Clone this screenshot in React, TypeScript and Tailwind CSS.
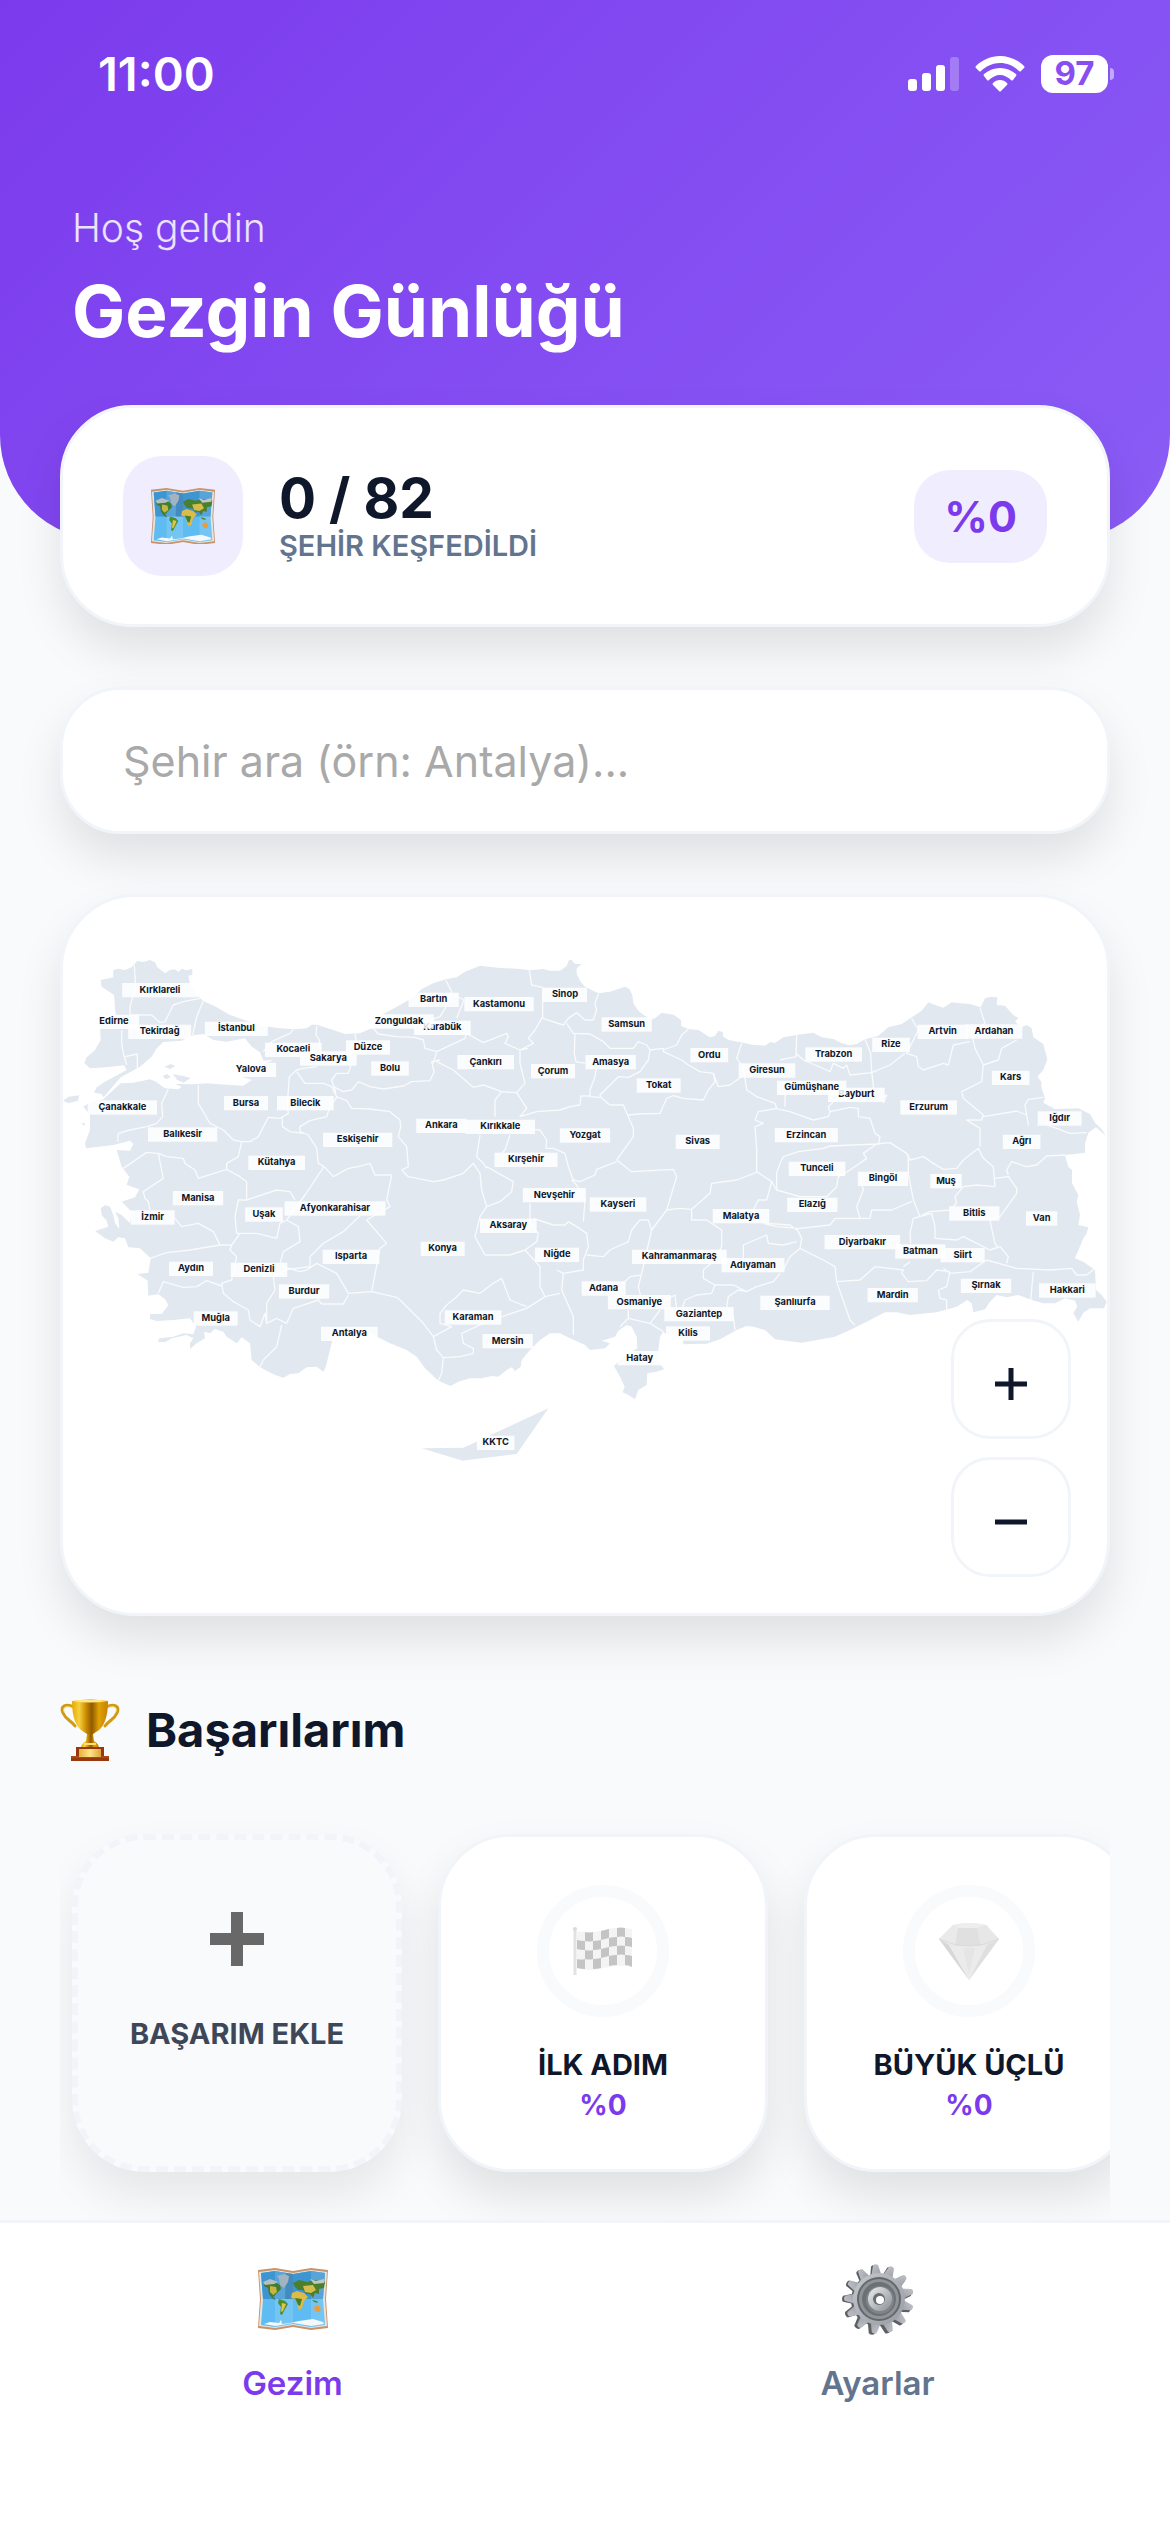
import React, { useState } from 'react';
import { clsx } from 'clsx';

interface City {
  name: string;
  x: number;
  y: number;
}

interface Achievement {
  id: string;
  title: string;
  percent: number;
  icon: React.ReactNode;
}

// Later labels are painted over earlier ones
const CITIES: City[] = [
  { name: 'Kırklareli', x: 330, y: 298 },
  { name: 'Edirne', x: 192, y: 393 },
  { name: 'Tekirdağ', x: 329, y: 423 },
  { name: 'İstanbul', x: 559, y: 414 },
  { name: 'Kocaeli', x: 730, y: 477 },
  { name: 'Sakarya', x: 835, y: 503 },
  { name: 'Yalova', x: 603, y: 537 },
  { name: 'Düzce', x: 954, y: 470 },
  { name: 'Bolu', x: 1020, y: 533 },
  { name: 'Bartın', x: 1151, y: 327 },
  { name: 'Karabük', x: 1177, y: 411 },
  { name: 'Zonguldak', x: 1047, y: 392 },
  { name: 'Kastamonu', x: 1347, y: 340 },
  { name: 'Sinop', x: 1545, y: 312 },
  { name: 'Samsun', x: 1730, y: 401 },
  { name: 'Çankırı', x: 1307, y: 514 },
  { name: 'Çorum', x: 1509, y: 541 },
  { name: 'Amasya', x: 1682, y: 514 },
  { name: 'Tokat', x: 1826, y: 584 },
  { name: 'Ordu', x: 1978, y: 493 },
  { name: 'Giresun', x: 2151, y: 539 },
  { name: 'Ankara', x: 1174, y: 705 },
  { name: 'Kırıkkale', x: 1351, y: 708 },
  { name: 'Yozgat', x: 1605, y: 734 },
  { name: 'Sivas', x: 1943, y: 753 },
  { name: 'Kırşehir', x: 1428, y: 807 },
  { name: 'Çanakkale', x: 217, y: 650 },
  { name: 'Bursa', x: 588, y: 637 },
  { name: 'Bilecik', x: 766, y: 637 },
  { name: 'Balıkesir', x: 398, y: 731 },
  { name: 'Eskişehir', x: 923, y: 747 },
  { name: 'Kütahya', x: 680, y: 816 },
  { name: 'Trabzon', x: 2351, y: 491 },
  { name: 'Rize', x: 2523, y: 462 },
  { name: 'Artvin', x: 2678, y: 423 },
  { name: 'Ardahan', x: 2832, y: 422 },
  { name: 'Kars', x: 2882, y: 561 },
  { name: 'Bayburt', x: 2419, y: 612 },
  { name: 'Gümüşhane', x: 2285, y: 591 },
  { name: 'Erzurum', x: 2636, y: 650 },
  { name: 'Erzincan', x: 2269, y: 733 },
  { name: 'Iğdır', x: 3029, y: 683 },
  { name: 'Ağrı', x: 2915, y: 753 },
  { name: 'Manisa', x: 444, y: 922 },
  { name: 'İzmir', x: 308, y: 980 },
  { name: 'Uşak', x: 642, y: 971 },
  { name: 'Afyonkarahisar', x: 855, y: 953 },
  { name: 'Aydın', x: 423, y: 1134 },
  { name: 'Denizli', x: 627, y: 1137 },
  { name: 'Isparta', x: 903, y: 1098 },
  { name: 'Burdur', x: 762, y: 1202 },
  { name: 'Muğla', x: 497, y: 1283 },
  { name: 'Antalya', x: 898, y: 1329 },
  { name: 'Nevşehir', x: 1513, y: 913 },
  { name: 'Kayseri', x: 1704, y: 941 },
  { name: 'Aksaray', x: 1375, y: 1005 },
  { name: 'Konya', x: 1178, y: 1074 },
  { name: 'Niğde', x: 1521, y: 1092 },
  { name: 'Kahramanmaraş', x: 1888, y: 1098 },
  { name: 'Adıyaman', x: 2109, y: 1123 },
  { name: 'Malatya', x: 2073, y: 976 },
  { name: 'Adana', x: 1661, y: 1193 },
  { name: 'Osmaniye', x: 1768, y: 1234 },
  { name: 'Gaziantep', x: 1947, y: 1270 },
  { name: 'Kilis', x: 1914, y: 1328 },
  { name: 'Karaman', x: 1269, y: 1280 },
  { name: 'Mersin', x: 1373, y: 1351 },
  { name: 'Hatay', x: 1769, y: 1402 },
  { name: 'Tunceli', x: 2301, y: 834 },
  { name: 'Bingöl', x: 2499, y: 864 },
  { name: 'Muş', x: 2688, y: 871 },
  { name: 'Elazığ', x: 2287, y: 942 },
  { name: 'Bitlis', x: 2773, y: 968 },
  { name: 'Van', x: 2975, y: 983 },
  { name: 'Diyarbakır', x: 2437, y: 1054 },
  { name: 'Batman', x: 2611, y: 1082 },
  { name: 'Siirt', x: 2738, y: 1093 },
  { name: 'Şırnak', x: 2808, y: 1185 },
  { name: 'Hakkari', x: 3052, y: 1199 },
  { name: 'Mardin', x: 2528, y: 1213 },
  { name: 'Şanlıurfa', x: 2235, y: 1236 },
  { name: 'KKTC', x: 1337, y: 1656 },
];

const LAND = [
  'M190 240 205 236 225 240 245 232 262 213 280 216 300 210 315 217 322 232 345 250 360 240 375 238 385 246 395 236 410 241 427 236 427 255 415 257 420 282 440 315 460 333 500 352 540 375 590 392 640 408 690 415 735 418 770 415 785 404 800 404 850 420 885 432 930 430 975 410 1000 372 1050 345 1090 322 1115 297 1150 280 1187 268 1220 262 1245 245 1290 227 1350 234 1400 236 1440 241 1480 237 1500 242 1530 242 1550 228 1557 210 1565 210 1575 222 1595 222 1580 235 1580 252 1592 275 1605 290 1645 310 1680 305 1725 290 1738 297 1747 315 1750 340 1765 362 1785 378 1800 390 1815 385 1835 368 1870 374 1893 390 1893 408 1915 417 1945 420 1980 442 1995 438 2005 422 2018 426 2020 440 2035 450 2080 458 2110 465 2145 467 2160 456 2175 459 2200 442 2240 435 2290 428 2315 442 2350 447 2375 460 2400 466 2420 462 2445 448 2485 437 2515 412 2555 402 2585 382 2615 362 2635 337 2655 345 2680 353 2705 337 2730 340 2760 342 2792 352 2805 325 2822 320 2842 322 2840 345 2865 347 2890 375 2905 384 2895 395 2915 412 2930 405 2945 415 2950 442 2980 462 2992 508 2980 540 2962 560 2974 575 2975 595 2985 625 2980 638 3015 657 3085 655 3120 672 3135 698 3155 718 3168 738 3138 712 3115 728 3105 760 3105 788 3075 792 3045 795 3055 830 3066 840 3066 880 3085 915 3080 935 3090 975 3085 1005 3115 1012 3110 1030 3100 1045 3075 1105 3100 1115 3135 1140 3138 1200 3155 1215 3170 1235 3162 1255 3120 1255 3100 1268 3085 1295 3070 1270 3082 1250 3075 1232 3045 1225 3015 1240 2980 1240 2945 1230 2905 1215 2870 1222 2840 1215 2820 1235 2805 1258 2770 1267 2765 1240 2752 1230 2720 1250 2660 1267 2580 1275 2540 1267 2505 1267 2460 1290 2400 1320 2355 1340 2255 1358 2175 1348 2145 1320 2110 1310 2090 1308 2060 1320 2010 1348 1970 1361 1900 1363 1898 1350 1860 1340 1840 1325 1830 1340 1825 1380 1826 1415 1842 1438 1820 1445 1792 1450 1790 1485 1765 1500 1755 1528 1735 1515 1718 1507 1724 1490 1710 1460 1692 1428 1720 1400 1762 1375 1760 1340 1745 1310 1730 1305 1705 1322 1695 1340 1655 1352 1680 1360 1665 1375 1620 1380 1605 1365 1560 1345 1530 1330 1500 1330 1470 1350 1440 1380 1415 1410 1412 1430 1395 1443 1385 1432 1370 1440 1345 1460 1325 1458 1295 1465 1260 1465 1225 1475 1202 1488 1165 1472 1125 1435 1100 1400 1070 1380 1020 1360 960 1330 900 1333 850 1340 840 1380 830 1420 826 1435 820 1445 800 1430 770 1432 745 1450 720 1452 700 1463 675 1455 630 1432 605 1410 600 1360 575 1342 560 1360 530 1340 520 1325 495 1317 480 1330 462 1325 465 1345 440 1360 420 1377 420 1360 430 1345 410 1335 365 1345 345 1357 323 1355 328 1345 370 1340 400 1330 430 1333 438 1310 420 1285 370 1290 320 1293 300 1287 300 1272 335 1272 355 1245 345 1228 325 1212 295 1217 293 1172 262 1152 295 1148 302 1105 270 1075 235 1072 225 1045 205 1042 190 1055 165 1045 135 1023 175 1010 170 992 155 975 152 955 165 945 180 950 190 975 195 1000 208 1017 205 985 195 965 215 975 240 1000 245 965 215 935 255 922 268 898 230 885 238 860 215 830 200 780 240 782 250 762 240 752 190 765 108 775 105 760 120 720 120 675 100 650 118 638 160 628 212 580 250 578 300 568 318 575 345 595 385 598 395 590 375 582 430 583 470 580 540 585 580 587 605 570 575 560 590 545 670 510 640 512 630 487 605 470 585 445 530 455 490 450 460 432 430 436 395 452 340 456 320 475 305 500 270 530 212 562 175 605 160 622 155 612 132 608 140 592 165 575 230 540 222 526 170 532 120 535 103 520 110 502 135 480 152 450 150 400 197 375 192 315 155 290 152 270 190 262Z',
  'M40 632 55 620 88 616 84 632 55 640Z',
  'M92 698 105 700 104 708Z',
  'M343 530 362 522 376 528 360 537Z',
  'M338 558 352 552 362 562 348 568Z',
  'M368 552 400 558 422 564 400 578 382 570Z',
  'M1115 1675 1240 1673 1495 1555 1400 1692 1238 1712Z',
].join('');

const BORDERS = [
  'M253 225 257 290 240 350 240 375 305 375 330 398 345 395 370 345 400 335 450 325',
  'M460 333 440 380 428 435M215 420 215 460 220 490 230 525M225 500 262 492 262 535',
  'M355 598 335 640 338 680 320 700 290 710 240 720 205 730 203 755',
  'M445 585 445 640 480 700 520 720 550 750 575 755 600 755 625 740 655 682 690 685 715 670 712 640 718 560 740 540 760 535 800 530',
  'M697 685 697 710 720 725 760 730M740 545 765 580 820 580 845 590 860 620 890 632 905 655 960 657 1020 665 1050 690 1052 710 1045 740 1070 770 1075 830 1055 840',
  'M860 622 840 650 830 680 780 692 750 710 750 725 775 735 800 775 805 820 822 830M860 625 855 600 845 570 860 550 895 550 905 520',
  'M850 590 880 605 905 600 925 575 960 590 1000 597 1060 588 1085 575 1140 572 1152 545 1145 515 1170 510',
  'M640 485 665 455 720 430 730 418M800 408 798 435 808 450 808 470M915 432 920 460',
  'M970 415 985 432 1040 440 1095 442 1120 450 1125 475 1160 485 1150 520M1160 485 1245 445 1250 430',
  'M1187 270 1205 305 1188 350 1170 380 1140 390M1205 310 1242 330 1220 385M1250 430 1300 458 1370 430 1375 440 1365 460 1410 480 1435 475',
  'M1438 240 1445 285 1478 292 1478 380 1455 420 1435 445 1450 460 1410 480M1478 385 1540 405 1555 385 1580 368 1605 390 1630 390 1640 360 1635 340 1645 312',
  'M1550 400 1570 430 1620 432 1660 455 1680 475 1750 475 1765 455 1790 465 1800 480 1840 475 1840 485 1895 510',
  'M1575 430 1573 490 1578 515 1605 520M1640 530 1635 560 1620 600 1620 620 1650 622',
  'M1800 480 1795 510 1770 545 1735 562 1705 560 1650 615 1655 625 1680 645 1720 645 1735 680 1750 715 1750 740 1700 810',
  'M1735 675 1765 672 1830 670 1850 625 1870 617 1900 625 1960 630 1975 600 1995 575 1990 550 1950 545 1915 525 1895 510M1840 480 1880 465 1895 435 1915 418',
  'M1410 480 1410 520 1425 580 1400 608 1355 605 1300 585 1270 592 1210 540 1160 515',
  'M1355 605 1335 630 1335 680M1400 608 1430 655 1410 680 1460 665 1530 660 1560 650 1590 645 1593 618 1620 618',
  'M1290 735 1280 800 1300 820 1310 835M1380 735 1365 780 1355 790M1440 718 1470 720 1490 750 1488 775 1510 775 1545 790 1555 830 1570 870 1590 875 1635 855 1640 838 1700 815',
  'M1700 810 1745 845 1870 838 1880 860 1850 960M2075 460 2060 505 2080 530 2090 600 2120 620 2175 640 2180 655 2125 665 2115 690 2140 700 2115 710 2120 780 2120 845',
  'M1990 550 2005 590 2040 585 2075 560M2240 436 2238 500 2190 510M2238 490 2260 510 2330 540 2340 545 2350 520 2380 535 2390 525 2400 555 2465 548',
  'M2445 448 2462 490 2465 545 2475 630 2510 615 2500 640M2465 548 2520 525 2565 490M2585 385 2605 420 2570 490 2600 500 2605 530 2620 540 2680 520 2695 525 2710 465 2760 455',
  'M2790 355 2805 400 2765 430 2775 475 2800 525 2795 575 2735 605 2740 625 2800 675 2795 690 2750 690 2790 715 2790 770',
  'M2800 525 2845 510 2855 475 2900 450M2800 680 2900 663 2930 675 2935 705 2925 645 2935 628 2980 622M2990 705 3020 715 3060 730 3110 728',
  'M2175 655 2220 665 2290 690 2335 680 2340 665 2335 650 2360 625M2340 665 2400 652 2425 655 2425 680 2460 685 2475 730 2490 740 2485 765M2205 600 2205 650',
  'M2190 820 2200 800 2245 785 2320 775 2340 768 2480 762 2520 758 2570 790 2580 810 2620 800 2650 820 2680 838 2720 835 2740 810 2785 775',
  'M2575 795 2575 850 2590 930 2610 980M2480 762 2440 790 2450 805 2400 840M2785 775 2800 805 2830 830 2835 890 2780 885 2740 890 2715 920 2720 940 2700 960 2640 965 2615 975',
  'M2835 865 2875 860 2900 895 2900 910 2850 980 2820 990 2825 1015 2835 1060 2845 1075M2875 855 2870 840 2885 815 2930 830 2960 825 2990 798 3045 795',
  'M2430 860 2440 900 2420 950 2430 985M2355 985 2460 985 2465 960 2525 960 2585 935M2355 985 2340 1005 2250 1015 2180 1010 2140 1000',
  'M2240 1015 2255 1045 2250 1075 2220 1100 2200 1140M2250 1075 2320 1110 2355 1130 2360 1175 2400 1290 2415 1305',
  'M2360 1175 2430 1170 2475 1130 2560 1140 2555 1150 2575 1175 2630 1172 2660 1140 2700 1145M2560 1130 2580 1115',
  'M2582 1060 2580 1030 2590 985 2645 970 2655 1010 2655 1045 2720 1050 2740 1040 2770 1055 2820 1080 2850 1070 2875 1100 2870 1120',
  'M2700 1145 2690 1190 2665 1200 2670 1225 2690 1230 2690 1262M2680 1135 2700 1150 2760 1145 2810 1110 2900 1135 3000 1140 3065 1135 3080 1155 3110 1155 3135 1135M2950 1145 2942 1230',
  'M2120 845 2165 875 2180 900 2250 920 2330 920 2360 890 2365 860 2400 840M2180 900 2180 850 2190 820M2165 875 2150 930 2125 930 2110 960',
  'M1850 960 1890 955 1925 958 1980 910 1985 880 2060 870 2120 847M1850 960 1805 1020 1795 990 1770 990 1745 1020 1735 1055 1680 1080 1660 1100 1610 1095M1805 1020 1775 1150 1765 1190 1775 1230',
  'M1925 960 1925 990 1970 990 2015 1020 2015 1070 1995 1110 1960 1140 1960 1165 1995 1185 1985 1210 1940 1215 1905 1230 1895 1260',
  'M1995 1185 2050 1185 2090 1205 2120 1190 2170 1175 2190 1150M2090 1205 2065 1200 2035 1220 2030 1250 2050 1280 2055 1320',
  'M2080 1105 2080 1065 2150 1035 2155 1060 2200 1065 2240 1055M2150 1000 2220 1005 2240 1020',
  'M1600 995 1605 930 1580 885 1565 870M1555 995 1580 1010 1610 1030 1615 1070 1600 1110 1600 1140 1540 1150 1535 1200 1570 1280 1570 1335',
  'M1450 985 1510 1005 1545 1005 1555 995M1310 950 1350 935 1385 905 1390 875 1310 830M1310 950 1295 900 1290 850 1270 820 1240 850 1180 870 1150 875 1075 860 1055 840',
  'M1310 950 1290 980 1275 1040 1305 1095 1380 1095 1425 1080 1460 1055 1465 1030 1440 1000 1440 940M1425 1080 1470 1130 1470 1190 1485 1220 1530 1210',
  'M1485 1220 1430 1255 1340 1285M1430 1250 1380 1230 1355 1165 1330 1180 1290 1210 1240 1200 1220 1220 1190 1245 1170 1270 1170 1300 1205 1310 1150 1340',
  'M965 1205 1040 1222 1050 1230 1120 1300 1150 1340 1160 1380 1180 1403 1175 1450 1165 1472M1180 1403 1230 1400 1270 1390 1270 1375 1240 1360 1235 1330 1300 1300',
  'M965 1205 990 1075 1010 1060 950 990 1020 950 1010 930 1025 855 975 855 960 820 925 830 895 835 850 860 822 830 765 915 710 990',
  'M930 977 880 1025 820 1060 780 1100 780 1130 700 1140M690 1120 700 1085 750 1055 745 1010 710 990 690 1000 680 1045 620 1030 560 1030 555 980 565 930 590 930 590 875 570 860 530 838 445 865 435 840 405 820 400 805 350 800 325 790 290 787 220 835',
  'M530 838 530 820 565 800 575 755M590 930 680 900 720 905 735 930M325 792 340 865 280 905 285 925 295 935 300 960M375 985 395 1010 445 1000 490 1025 510 1065 545 1065 570 1030',
  'M300 1105 350 1088 420 1080 510 1065M545 1065 540 1080 560 1100 545 1170 515 1180 520 1210 550 1235 595 1260 600 1290 630 1310 645 1270 650 1300',
  'M325 1210 340 1175 400 1192 440 1190 470 1172 515 1188M700 1130 750 1145 770 1140 800 1120 860 1150 895 1210 965 1205M895 1215 880 1242 815 1242 805 1230 730 1255 710 1300 680 1285 650 1300 650 1240 675 1200 670 1160 715 1135',
  'M695 1305 680 1370 640 1410 630 1432M1710 1310 1735 1285 1800 1300 1830 1260M1735 1285 1735 1260M1720 1180 1740 1160 1775 1155M1800 1300 1840 1325M1540 1150 1520 1140M1880 1260 1875 1215 1830 1240',
].join('');

const MapIcon = ({ className }: { className?: string }) => (
  <svg viewBox="0 0 72 62" className={className} aria-hidden="true">
    <path d="M1 2 18 0 36 3 54 0 71 2 69 31 71 60 54 62 36 59 18 62 1 60 3 31Z" fill="#c9936a" />
    <path d="M2 4 18 2 36 5 54 2 70 4 68 31 70 58 54 60 36 57 18 60 2 58 4 31Z" fill="#e6e4de" />
    <path d="M4 5 18 3 36 6 54 3 68 5 66 31 68 57 54 59 36 56 18 59 4 57 6 31Z" fill="#5ebcf2" />
    <path d="M4 5 18 3 36 6 54 3 68 5 66 31 6 31Z" fill="#3d95d2" />
    <path d="M18 3 36 6V56L18 59Z" fill="#fff" opacity=".14" />
    <path d="M54 3 68 5 66 31 68 57 54 59Z" fill="#fff" opacity=".14" />
    <path d="M29 5 36 6V31H28Z" fill="#2c6d9e" opacity=".45" />
    <path d="M20 8 27 6 32 8 31 14 27 20 23 17 22 11Z" fill="#a3b3bf" />
    <path d="M7 14 12 12 18 14 23 17 24 21 20 25 16 29 19 32 16 31 12 26 11 20 7 18Z" fill="#417d2d" />
    <path d="M13 18 19 19 20 24 16 27 13 24Z" fill="#c9b440" />
    <path d="M6 14 13 11 21 14 17 16 8 17Z" fill="#b5bfc3" />
    <path d="M22 31 28 33 31 36 28 41 25 47 23 46 24 39 21 35Z" fill="#4d8f2c" />
    <path d="M25 35 29 36 26 43 24 44Z" fill="#e4c24c" />
    <path d="M38 19 36 15 42 12 50 14 58 12 68 14 67 20 62 21 62 26 58 25 56 30 53 26 49 26 46 22 41 22Z" fill="#4b7f2d" />
    <path d="M46 18 56 17 59 22 54 25 48 24Z" fill="#d6bd4a" />
    <path d="M53 11 59 13 67 11 67 15 57 16Z" fill="#c1c6c0" />
    <path d="M35 25 40 23 47 25 51 29 47 33 45 40 42 42 40 36 39 31 34 30Z" fill="#ddbb48" />
    <path d="M38 30 45 31 43 38 41 37Z" fill="#437f28" />
    <path d="M57 39 61 37 64 41 62 44 58 43Z" fill="#f19a34" />
    <path d="M55 32 60 33 61 35 57 34Z" fill="#4a8b2a" />
    <path d="M7 56 13 54 22 55 24 52 25 56 33 55 42 53 56 51 66 54 67 56 54 58 36 55 18 58Z" fill="#f4f8fa" />
  </svg>
);

const TEETH = [0, 1, 2, 3, 4, 5, 6, 7, 8, 9, 10, 11, 12];

const GearIcon = ({ className }: { className?: string }) => (
  <svg viewBox="0 0 72 72" className={className} aria-hidden="true">
    <defs>
      <linearGradient id="gear-face" x1="0" y1="0" x2="1" y2="1">
        <stop offset="0" stopColor="#c3c8cd" />
        <stop offset="1" stopColor="#9a9ba3" />
      </linearGradient>
      <linearGradient id="gear-hub" x1="0" y1="0" x2="1" y2="1">
        <stop offset="0" stopColor="#eceef0" />
        <stop offset="1" stopColor="#8b8f95" />
      </linearGradient>
    </defs>
    <g fill="#5d6063" transform="translate(-1 1)">
      {TEETH.map((t) => (
        <path key={t} d="M31 14 33 2Q36 0 39 2L42 14Z" transform={`rotate(${t * 27.7 - 5} 36 36)`} />
      ))}
      <circle cx="36" cy="36" r="26" />
    </g>
    <g fill="url(#gear-face)">
      {TEETH.map((t) => (
        <path key={t} d="M31 14 34 2Q36 0 39 2L42 14Z" transform={`rotate(${t * 27.7 - 5} 37 36)`} />
      ))}
      <circle cx="37" cy="36" r="26" />
    </g>
    <circle cx="37" cy="36" r="22" fill="#63686c" />
    <circle cx="37" cy="36" r="20" fill="#8f9499" />
    <circle cx="37" cy="36" r="17" fill="#6c7176" />
    <circle cx="38" cy="37" r="14" fill="#7f848a" />
    <circle cx="38" cy="36" r="12" fill="url(#gear-hub)" />
    <circle cx="37" cy="36" r="6" fill="#696e73" />
    <circle cx="38" cy="37" r="4" fill="#fff" />
  </svg>
);

const TrophyIcon = ({ className }: { className?: string }) => (
  <svg viewBox="0 0 60 62" className={className} aria-hidden="true">
    <defs>
      <linearGradient id="cup">
        <stop offset="0" stopColor="#e8a800" />
        <stop offset=".2" stopColor="#f6d13c" />
        <stop offset=".4" stopColor="#c98800" />
        <stop offset=".55" stopColor="#8f5a00" />
        <stop offset=".75" stopColor="#e2a105" />
        <stop offset="1" stopColor="#c28200" />
      </linearGradient>
      <linearGradient id="plaque">
        <stop offset="0" stopColor="#e8b23c" />
        <stop offset=".5" stopColor="#ffe48a" />
        <stop offset="1" stopColor="#dda63a" />
      </linearGradient>
    </defs>
    <path d="M14 8C6 4 0 7 3 14S11 21 15 27M46 8C54 4 60 7 57 14S49 21 45 27" fill="none" stroke="#d19a14" strokeWidth="3" strokeLinecap="round" />
    <path d="M13 9C7 6 2 8 4 13M47 9C53 6 58 8 56 13" fill="none" stroke="#f3d35f" strokeWidth="1" />
    <path d="M12 2Q30-1 48 2C48 18 44 29 36 33L33 35Q30 37 27 35L24 33C16 29 12 18 12 2Z" fill="url(#cup)" />
    <path d="M12 2Q30 5 48 2Q30-1 12 2Z" fill="#ffe68a" />
    <path d="M27 35H33L34 42Q39 45 39 49H21Q21 45 26 42Z" fill="url(#cup)" />
    <path d="M24 45H36" stroke="#ffe27a" strokeWidth="2" />
    <path d="M16 48H44V57H49V62H11V57H16Z" fill="#98380e" />
    <path d="M11 58H49" stroke="#c25a20" strokeWidth="1" />
    <path d="M19 50H41V58H19Z" fill="url(#plaque)" />
  </svg>
);

const FlagIcon = ({ className }: { className?: string }) => (
  <svg viewBox="0 0 60 50" className={className} aria-hidden="true">
    <path d="M2 2V49" stroke="#a0a0a0" strokeWidth="3" />
    <circle cx="2" cy="3" r="2" fill="#888" />
    <path d="M4 5Q18 8 31 4T59 3V41Q45 38 31 42T4 42Z" fill="#dcdcdc" />
    <g fill="#3f3f3f">
      <path d="M12 6Q16 7 20 6V15Q16 16 12 15ZM28 5Q32 4 36 3V12Q32 13 28 14ZM44 2Q48 1 52 2V11Q48 10 44 11Z" />
      <path d="M4 14Q8 15 12 15V24Q8 24 4 23ZM20 15Q24 15 28 14V23Q24 24 20 24ZM36 12Q40 11 44 11V20Q40 20 36 21ZM52 11Q56 11 59 12V21Q56 20 52 20Z" />
      <path d="M12 24Q16 25 20 24V33Q16 34 12 33ZM28 23Q32 22 36 21V30Q32 31 28 32ZM44 20Q48 19 52 20V29Q48 28 44 29Z" />
      <path d="M4 33Q8 34 12 33V43Q8 43 4 42ZM20 33Q24 33 28 32V42Q24 43 20 43ZM36 30Q40 29 44 29V39Q40 39 36 40ZM52 29Q56 29 59 30V41Q56 39 52 39Z" />
    </g>
  </svg>
);

const DiamondIcon = ({ className }: { className?: string }) => (
  <svg viewBox="0 0 60 58" className={className} aria-hidden="true">
    <path d="M0 17 14 3Q30-1 47 3L60 17 30 58Z" fill="#b9b9b9" />
    <path d="M14 3 19 6H38L47 3Q30-1 14 3Z" fill="#c9c9c9" />
    <path d="M14 3 19 6 16 23 0 17Z" fill="#bdbdbd" />
    <path d="M19 6H38L42 24H16Z" fill="#9c9c9c" />
    <path d="M47 3 38 6 42 24 60 17Z" fill="#b2b2b2" />
    <path d="M0 17 10 23 30 58Z" fill="#7c7c7c" />
    <path d="M10 23Q30 27 48 23L30 58Z" fill="#c0c0c0" />
    <path d="M24 26H36L30 52Z" fill="#acacac" />
    <path d="M60 17 48 23 30 58Z" fill="#989898" />
    <path d="M0 17Q30 31 60 17" fill="none" stroke="#8a8a8a" strokeWidth="1" />
  </svg>
);

const ACHIEVEMENTS: Achievement[] = [
  { id: 'ilk', title: 'İLK ADIM', percent: 0, icon: <FlagIcon className="w-[60px]" /> },
  { id: 'uclu', title: 'BÜYÜK ÜÇLÜ', percent: 0, icon: <DiamondIcon className="w-[60px]" /> },
];

const StatusBar = () => (
  <div className="flex h-[148px] items-center justify-between pr-14 pl-[98px]">
    <span className="text-[47px] font-semibold">11:00</span>
    <div className="flex items-center gap-4">
      <svg viewBox="0 0 51 36" className="w-[51px]" fill="currentColor" aria-hidden="true">
        <rect x="0" y="23" width="9" height="12" rx="3" />
        <rect x="14" y="17" width="9" height="18" rx="3" />
        <rect x="28" y="9" width="9" height="26" rx="3" />
        <rect x="42" y="1" width="9" height="34" rx="3" opacity=".25" />
      </svg>
      <svg viewBox="0 0 50 36" className="w-[50px]" fill="currentColor" aria-hidden="true">
        <path d="M25 0C34 0 43 4 49 10Q50 11 49 12L46 15Q45 16 44 15C39 10 32 7 25 7S11 10 6 15Q5 16 4 15L1 12Q0 11 1 10C7 4 16 0 25 0Z" />
        <path d="M25 12C31 12 36 14 41 18Q42 19 41 20L38 24Q37 25 36 24C33 21 29 19 25 19S17 21 14 24Q13 25 12 24L9 20Q8 19 9 18C14 14 19 12 25 12Z" />
        <path d="M25 24C28 24 30 25 32 27Q33 28 32 29L26 35Q25 36 24 35L18 29Q17 28 18 27C20 25 22 24 25 24Z" />
      </svg>
      <div className="flex items-center gap-[2px]">
        <span className="flex h-[38px] w-[67px] items-center justify-center rounded-xl bg-white text-[33px] font-bold text-[#884ef2]">
          97
        </span>
        <span className="h-3 w-1 rounded-r-full bg-white/50" />
      </div>
    </div>
  </div>
);

const TurkeyMap = () => (
  <svg viewBox="39 21 3132 2148" className="block w-full" role="img" aria-label="Türkiye haritası">
    <path d={LAND} fill="#e2e8f0" />
    <path d={BORDERS} fill="none" stroke="#fff" strokeWidth="4" strokeLinejoin="round" opacity=".8" />
    {CITIES.map(({ name, x, y }) => {
      const width = 37 + name.length * 19;
      return (
        <g key={name}>
          <rect x={x - width / 2} y={y - 19} width={width} height="43" fill="#fff" opacity=".85" />
          <text x={x} y={y + 10} textAnchor="middle" fontSize="28" fontWeight="700" fill="#0f172a">
            {name}
          </text>
        </g>
      );
    })}
  </svg>
);

const cardStyle = 'border-[3px] border-slate-100 bg-white shadow-[0_24px_45px_rgba(0,0,0,0.1)]';
const zoomButton =
  'flex size-[120px] items-center justify-center rounded-[39px] border-[3px] border-slate-100 bg-white pt-[10px] text-slate-900';

const App: React.FC = () => {
  const [query, setQuery] = useState('');
  const [tab, setTab] = useState('gezim');

  return (
    <div className="flex h-screen flex-col bg-slate-50 font-['Inter',sans-serif] text-slate-900">
      <div className="min-h-0 flex-1 overflow-hidden">
        <header className="rounded-b-[105px] bg-linear-135 from-[#7c3aed] to-[#8b5cf6] pb-[181px] text-white">
          <StatusBar />
          <div className="px-[72px] pt-[53px]">
            <p className="text-[39px] leading-[54px] font-light text-white/85">Hoş geldin</p>
            <h1 className="mt-2 text-[71px] leading-[96px] font-bold">Gezgin Günlüğü</h1>
          </div>
        </header>

        <main className="px-[60px]">
          <section className={clsx('-mt-[135px] flex items-center rounded-[72px] px-[60px] py-12', cardStyle)}>
            <div className="flex size-[120px] items-center justify-center rounded-[39px] bg-[#f0eefe]">
              <MapIcon className="w-[66px]" />
            </div>
            <div className="ml-9 flex-1">
              <p className="text-[55px] leading-[60px] font-bold">0 / 82</p>
              <p className="text-[29px] leading-9 font-semibold text-slate-500">ŞEHİR KEŞFEDİLDİ</p>
            </div>
            <span className="rounded-[36px] bg-[#f0eefe] px-[30px] py-[18px] text-[43px] leading-[57px] font-bold text-[#7c3aed]">
              %0
            </span>
          </section>

          <input
            type="text"
            value={query}
            onChange={(e) => setQuery(e.target.value)}
            aria-label="Şehir ara"
            placeholder="Şehir ara (örn: Antalya)..."
            className={clsx(
              'mt-[60px] block h-[147px] w-full rounded-[60px] px-[60px] text-[43px] outline-none placeholder:text-[#a9a9a9]',
              cardStyle
            )}
          />

          <section className={clsx('relative mt-[60px] overflow-hidden rounded-[75px]', cardStyle)}>
            <TurkeyMap />
            <div className="absolute right-9 bottom-9 flex flex-col gap-[18px]">
              <button type="button" aria-label="Yakınlaştır" className={zoomButton}>
                <svg viewBox="0 0 32 32" className="w-8" stroke="currentColor" strokeWidth="5" aria-hidden="true">
                  <path d="M0 16H32M16 0V32" />
                </svg>
              </button>
              <button type="button" aria-label="Uzaklaştır" className={zoomButton}>
                <svg viewBox="0 0 32 32" className="w-8" stroke="currentColor" strokeWidth="5" aria-hidden="true">
                  <path d="M0 16H32" />
                </svg>
              </button>
            </div>
          </section>

          <div className="mt-[84px] flex h-[60px] items-center gap-[26px]">
            <TrophyIcon className="w-[60px]" />
            <h2 className="text-[47px] font-bold">Başarılarım</h2>
          </div>

          <div className="mt-[50px] flex gap-9 overflow-x-auto px-3 pt-6 pb-12 [scrollbar-width:none]">
            <button
              type="button"
              className="flex w-[330px] shrink-0 flex-col items-center rounded-[72px] border-[6px] border-dashed border-slate-100 bg-slate-50 pt-[72px] shadow-[0_24px_45px_rgba(0,0,0,0.08)]"
            >
              <svg viewBox="0 0 54 54" className="w-[54px]" stroke="#686868" strokeWidth="12" aria-hidden="true">
                <path d="M0 27H54M27 0V54" />
              </svg>
              <span className="mt-12 text-[29px] leading-10 font-bold text-[#3e4757]">BAŞARIM EKLE</span>
            </button>
            {ACHIEVEMENTS.map((item) => (
              <article
                key={item.id}
                className={clsx('flex w-[330px] shrink-0 flex-col items-center rounded-[72px] pt-12 pb-11', cardStyle)}
              >
                <div className="flex size-[132px] items-center justify-center rounded-full border-[12px] border-slate-50">
                  <div className="opacity-30 grayscale">{item.icon}</div>
                </div>
                <h3 className="mt-7 text-[29px] leading-10 font-bold">{item.title}</h3>
                <p className="text-[28px] leading-10 font-bold text-[#7c3aed]">%{item.percent}</p>
              </article>
            ))}
          </div>
        </main>
      </div>

      <nav className="grid grid-cols-2 border-t-[3px] border-slate-100 bg-white pt-10 pb-32">
        <button
          type="button"
          onClick={() => setTab('gezim')}
          className={clsx('flex flex-col items-center gap-[27px]', tab === 'gezim' ? 'text-[#7c3aed]' : 'text-slate-500')}
        >
          <span className="flex size-[72px] items-center">
            <MapIcon className="w-full" />
          </span>
          <span className="text-[33px] leading-[42px] font-semibold">Gezim</span>
        </button>
        <button
          type="button"
          onClick={() => setTab('ayarlar')}
          className={clsx('flex flex-col items-center gap-[27px]', tab === 'ayarlar' ? 'text-[#7c3aed]' : 'text-slate-500')}
        >
          <GearIcon className="size-[72px]" />
          <span className="text-[33px] leading-[42px] font-semibold">Ayarlar</span>
        </button>
      </nav>
    </div>
  );
};

export default App;
